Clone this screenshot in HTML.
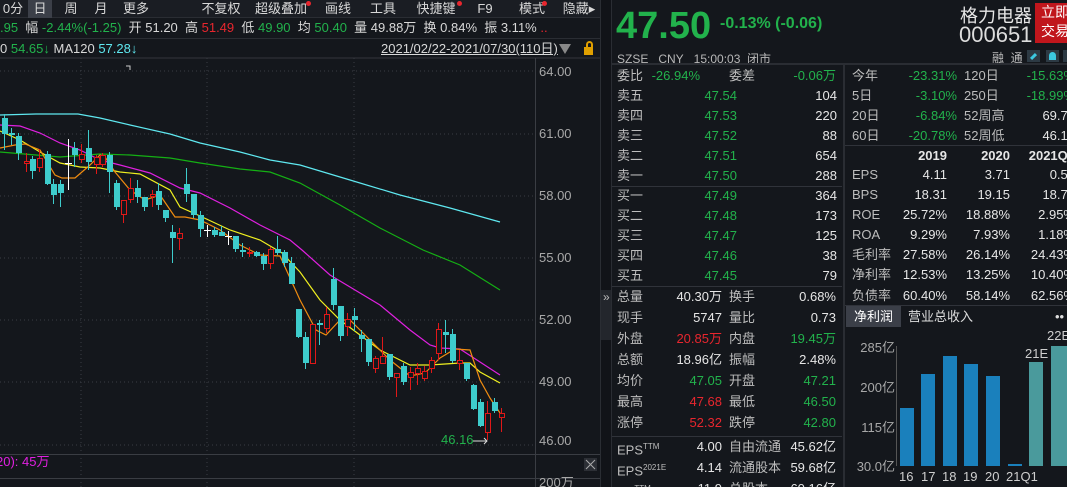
<!DOCTYPE html>
<html style="overflow:hidden;height:487px"><head><meta charset="utf-8"><style>
*{margin:0;padding:0;box-sizing:border-box}
html,body{overflow:hidden}
body{width:1067px;height:487px;overflow:hidden;background:#14171c;font-family:"Liberation Sans","Noto Sans CJK SC",sans-serif;color:#d8d8d8;position:relative;font-size:13px}
.a{position:absolute;white-space:nowrap}
.g{color:#22b24c}.r{color:#e8262e}.w{color:#e6e6e6}.l{color:#bdbdbd}
.tab{position:absolute;top:0;height:18px;line-height:18px;font-size:13px;color:#d8d8d8;text-align:center}
.row{position:absolute;height:20px;line-height:20px;font-size:13px}
.dot{position:absolute;width:5px;height:5px;border-radius:50%;background:#e8262e}
</style></head><body>
<div class="a" style="left:0;top:0;width:600px;height:18px;background:#1a1d23;border-bottom:1px solid #2a2d33"></div>
<div class="tab" style="left:0;width:26px">0分</div>
<div class="tab" style="left:28px;width:24px;background:#3b3f48">日</div>
<div class="tab" style="left:58px;width:26px">周</div>
<div class="tab" style="left:88px;width:26px">月</div>
<div class="tab" style="left:118px;width:36px">更多</div>
<div class="tab" style="left:198px;width:46px">不复权</div>
<div class="tab" style="left:250px;width:62px">超级叠加</div><div class="dot" style="left:306px;top:1px"></div>
<div class="tab" style="left:320px;width:36px">画线</div>
<div class="tab" style="left:365px;width:36px">工具</div>
<div class="tab" style="left:410px;width:52px">快捷键</div><div class="dot" style="left:457px;top:1px"></div>
<div class="tab" style="left:470px;width:30px">F9</div>
<div class="tab" style="left:510px;width:44px">模式</div><div class="dot" style="left:542px;top:1px"></div>
<div class="tab" style="left:558px;width:42px">隐藏▸</div>
<div class="a" style="left:0;top:20px;font-size:13px;line-height:16px"><span class="g">.95</span>&nbsp; 幅 <span class="g">-2.44%(-1.25)</span>&nbsp; 开 51.20&nbsp; 高 <span class="r">51.49</span>&nbsp; 低 <span class="g">49.90</span>&nbsp; 均 <span class="g">50.40</span>&nbsp; 量 49.88万&nbsp; 换 0.84%&nbsp; 振 3.11% <span class="r">..</span></div>
<div class="a" style="left:0;top:38px;width:600px;height:1px;background:#2a2d33"></div>
<div class="a" style="left:0;top:41px;font-size:13px;line-height:16px">0 <span class="g">54.65↓</span> MA120 <span style="color:#5fe8f0">57.28↓</span></div>
<div class="a" style="left:381px;top:41px;font-size:13px;line-height:16px;text-decoration:underline">2021/02/22-2021/07/30(110日)</div>
<div class="a" style="left:559px;top:44px;width:0;height:0;border-left:6px solid transparent;border-right:6px solid transparent;border-top:10px solid #888"></div>
<div class="a" style="left:584px;top:47px;width:9px;height:8px;background:#e0a000"></div>
<div class="a" style="left:586px;top:41px;width:7px;height:7px;border:2px solid #e0a000;border-bottom:none;border-radius:4px 4px 0 0"></div>
<svg class="a" style="left:0;top:0" width="600" height="487" id="ch">
<g stroke="#3a3e45" stroke-dasharray="1,3" stroke-width="1">
<line x1="0" y1="71" x2="535" y2="71"/><line x1="0" y1="134" x2="535" y2="134"/><line x1="0" y1="196" x2="535" y2="196"/><line x1="0" y1="258" x2="535" y2="258"/><line x1="0" y1="320" x2="535" y2="320"/><line x1="0" y1="382" x2="535" y2="382"/><line x1="0" y1="445" x2="535" y2="445"/>
<line x1="81" y1="58" x2="81" y2="487"/><line x1="207" y1="58" x2="207" y2="487"/><line x1="354" y1="58" x2="354" y2="487"/>
</g>
<line x1="0" y1="58" x2="600" y2="58" stroke="#33363c"/>
<line x1="535.5" y1="58" x2="535.5" y2="487" stroke="#3a3d43"/>
<line x1="0" y1="454.5" x2="600" y2="454.5" stroke="#3a3d43"/>
<line x1="0" y1="478.5" x2="600" y2="478.5" stroke="#3a3d43"/>
<g fill="#a8a8a8" font-size="13" font-family="Liberation Sans,Noto Sans CJK SC,sans-serif">
<text x="539" y="76">64.00</text><text x="539" y="138">61.00</text><text x="539" y="200">58.00</text><text x="539" y="262">55.00</text><text x="539" y="324">52.00</text><text x="539" y="386">49.00</text><text x="539" y="445">46.00</text><text x="539" y="487">200万</text>
</g>
<text x="441" y="444" fill="#22b24c" font-size="13" font-family="Liberation Sans,sans-serif">46.16</text>
<path d="M473 441H487M484 438L487 441L484 444" stroke="#ddd" fill="none"/>
<text x="-4" y="466" fill="#e020e0" font-size="13" font-family="Liberation Sans,Noto Sans CJK SC,sans-serif">20): 45万</text>
<rect x="584" y="458" width="13" height="13" fill="#2c2f35"/><path d="M586 460L595 469M595 460L586 469" stroke="#aaa"/>
<path d="M126 66H130V70" stroke="#ccc" fill="none"/>
<g fill="none" stroke-width="1.2">
<polyline stroke="#5fe8f0" points="0,115 36,114 78,114 100,118 130,125 170,134 200,143 240,152 270,160 300,165 350,180 400,195 450,208 500,222"/>
<polyline stroke="#14b014" points="0,152 60,157 100,154 130,155 170,158 200,163 240,169 270,172 300,183 340,205 380,228 423,250 460,265 500,290"/>
<polyline stroke="#e020e0" points="0,125 20,126 40,133 60,143 80,150 100,160 120,165 150,173 180,188 200,193 230,208 260,225 290,240 302,250 330,275 350,287 380,305 410,330 430,345 440,348 460,349 480,362 500,375"/>
<polyline stroke="#f0f020" points="0,131 20,140 40,152 60,163 80,167 100,168 120,172 140,174 170,190 180,207 200,216 230,230 260,240 282,253 300,272 320,300 340,320 360,335 380,350 410,365 430,365 460,363 470,363 480,372 500,383"/>
<polyline stroke="#f08c10" points="0,148 15,145 25,144 40,150 55,175 62,178 75,178 90,165 100,155 105,157 115,172 130,190 145,200 160,195 175,217 185,217 200,220 220,230 240,245 260,255 280,256 300,300 316,330 326,335 340,320 350,320 370,340 390,360 410,376 425,373 440,358 455,349 470,350 480,380 490,398 500,413"/>
</g>
<g id="cd"></g>
</svg>
<script>
var d=[[4,'c',118,134,114,150],[11,'c',133,135,128,145],[18,'c',136,153,133,160],[26,'r',161,163,153,172],[32,'c',159,171,156,179],[39,'r',158,167,149,172],[47,'c',154,184,151,185],[53,'c',184,195,179,204],[60,'c',184,193,180,207],[68,'w',163,163,139,190],[74,'c',148,155,142,167],[81,'r',154,159,144,163],[88,'c',148,162,130,170],[96,'r',157,164,155,174],[102,'r',155,164,153,167],[109,'c',155,172,152,193],[116,'c',183,207,180,210],[123,'r',200,214,200,223],[130,'r',188,199,178,203],[137,'c',188,197,180,203],[144,'c',197,207,197,211],[152,'r',194,196,190,207],[158,'c',191,205,183,210],[165,'c',210,218,210,222],[172,'c',232,238,225,263],[179,'r',233,238,228,250],[186,'c',184,194,168,202],[193,'c',194,215,194,218],[200,'c',215,229,211,237],[207,'w',230,230,225,237],[214,'c',230,235,227,237],[221,'c',232,236,226,236],[228,'w',236,236,231,245],[235,'c',236,249,236,252],[242,'c',250,252,243,257],[249,'r',252,253,247,257],[256,'c',252,256,251,257],[263,'c',256,264,253,270],[270,'r',249,263,247,269],[277,'c',249,253,236,255],[284,'c',252,263,250,267],[291,'c',263,284,257,284],[298,'c',309,337,309,338],[305,'c',337,363,332,369],[312,'r',324,363,324,363],[319,'c',323,325,320,345],[326,'r',314,328,307,333],[333,'c',279,305,268,310],[340,'c',306,336,306,341],[347,'r',319,326,313,336],[354,'c',316,320,308,331],[361,'c',335,339,330,352],[368,'c',339,362,339,366],[375,'r',358,368,356,373],[382,'r',356,363,337,363],[389,'c',354,377,354,380],[396,'r',373,377,373,397],[403,'c',366,382,363,385],[410,'r',372,377,367,390],[417,'r',368,373,363,385],[424,'r',371,378,366,381],[431,'r',360,368,357,373],[438,'r',329,353,323,360],[445,'c',332,335,320,353],[452,'c',334,361,329,363],[459,'r',360,363,350,370],[466,'c',363,379,363,381],[473,'c',385,409,384,410],[480,'c',402,426,399,427],[487,'r',413,432,401,440],[494,'c',402,411,398,413],[501,'r',413,417,408,432]];
var s='';d.forEach(function(c){var x=c[0],col=c[1]=='c'?'#3ecccc':(c[1]=='r'?'#e01818':'#ffffff');
if(c[1]=='r'){s+='<line x1="'+(x+.5)+'" y1="'+c[4]+'" x2="'+(x+.5)+'" y2="'+c[2]+'" stroke="'+col+'"/><line x1="'+(x+.5)+'" y1="'+c[3]+'" x2="'+(x+.5)+'" y2="'+c[5]+'" stroke="'+col+'"/>';
s+='<rect x="'+(x-2)+'.5" y="'+c[2]+'.5" width="5" height="'+Math.max(1,c[3]-c[2])+'" fill="#14171c" stroke="'+col+'"/>';}
else{s+='<line x1="'+(x+.5)+'" y1="'+c[4]+'" x2="'+(x+.5)+'" y2="'+c[5]+'" stroke="'+col+'"/>';
if(c[1]=='c')s+='<rect x="'+(x-2)+'" y="'+c[2]+'" width="6" height="'+Math.max(2,c[3]-c[2])+'" fill="'+col+'"/>';
else s+='<line x1="'+(x-3)+'" y1="'+c[2]+'.5" x2="'+(x+4)+'" y2="'+c[2]+'.5" stroke="'+col+'"/>';}});
document.getElementById('cd').innerHTML=s;
</script>
<div class="a" style="left:600px;top:0;width:12px;height:487px;background:#111318;border-left:1px solid #2a2d33;border-right:1px solid #2a2d33"></div>
<div class="a" style="left:601px;top:290px;width:10px;height:50px;background:#23262c"></div>
<div class="a" style="left:603px;top:290px;font-size:12px;color:#bbb">»</div>
<div class="a g" style="left:616px;top:5px;font-size:38px;font-weight:bold;line-height:42px">47.50</div>
<div class="a g" style="left:720px;top:15px;font-size:16px;font-weight:bold">-0.13% (-0.06)</div>
<div class="a" style="left:617px;top:50px;font-size:12px;color:#b8b8b8">SZSE&nbsp;&nbsp; CNY&nbsp;&nbsp; 15:00:03&nbsp; 闭市</div>
<div class="a" style="left:960px;top:2px;font-size:18px;color:#e6e6e6">格力电器</div>
<div class="a" style="left:959px;top:22px;font-size:22px;color:#ddd">000651</div>
<div class="a" style="left:1035px;top:3px;width:32px;height:40px;background:#c0161c;color:#fff;font-size:14px;line-height:19px;padding-left:6px">立即<br>交易</div>
<div class="a" style="left:992px;top:49px;font-size:12px;color:#bbb">融&nbsp; 通</div>
<div class="a" style="left:1027px;top:50px;width:13px;height:12px;background:#2d3a44"></div><div class="a" style="left:1030px;top:55px;width:7px;height:3px;background:#3cc8e0;transform:rotate(-45deg)"></div>
<div class="a" style="left:1046px;top:50px;width:13px;height:12px;background:#2d3a44"></div><div class="a" style="left:1049px;top:52px;width:7px;height:8px;background:#3cc8e0;border-radius:4px 4px 0 0"></div>
<div class="a" style="left:1063px;top:50px;width:4px;height:12px;background:#2d3a44"></div>
<div class="a" style="left:612px;top:63px;width:455px;height:2px;background:#2a2d33"></div>
<div class="a" style="left:843px;top:65px;width:2px;height:422px;background:#2a2d33"></div>
<div id="L"></div>
<div class="a" style="left:612px;top:186px;width:230px;height:1px;background:#30333a"></div>
<div class="a" style="left:612px;top:286px;width:230px;height:1px;background:#30333a"></div>
<div class="a" style="left:612px;top:436px;width:230px;height:1px;background:#30333a"></div>
<div class="a" style="left:845px;top:145px;width:222px;height:1px;background:#30333a"></div>
<div class="a" style="left:845px;top:305px;width:222px;height:1px;background:#30333a"></div>
<script>
function R(y,h){return '<div class="row" style="top:'+(y-10)+'px;left:0;width:1067px">'+h+'</div>'}
function c(x,t,cl,al){return '<span class="a '+(cl||'l')+'" style="'+(al?'right:'+(1067-x)+'px':'left:'+x+'px')+'">'+t+'</span>'}
var h='';
h+=R(76,c(617,'委比')+c(700,'-26.94%','g',1)+c(729,'委差')+c(836,'-0.06万','g',1));
var sl=[['卖五','47.54','104'],['卖四','47.53','220'],['卖三','47.52','88'],['卖二','47.51','654'],['卖一','47.50','288'],['买一','47.49','364'],['买二','47.48','173'],['买三','47.47','125'],['买四','47.46','38'],['买五','47.45','79']];
sl.forEach(function(r,i){h+=R(96+i*20,c(617,r[0])+c(737,r[1],'g',1)+c(837,r[2],'w',1));});
var st=[['总量','40.30万','w','换手','0.68%','w'],['现手','5747','w','量比','0.73','w'],['外盘','20.85万','r','内盘','19.45万','g'],['总额','18.96亿','w','振幅','2.48%','w'],['均价','47.05','g','开盘','47.21','g'],['最高','47.68','r','最低','46.50','g'],['涨停','52.32','r','跌停','42.80','g']];
st.forEach(function(r,i){h+=R(297+i*21,c(617,r[0])+c(722,r[1],r[2],1)+c(729,r[3])+c(836,r[4],r[5],1));});
h+=R(447,c(617,'EPS<sup style="font-size:8px">TTM</sup>')+c(722,'4.00','w',1)+c(729,'自由流通')+c(836,'45.62亿','w',1));
h+=R(468,c(617,'EPS<sup style="font-size:8px">2021E</sup>')+c(722,'4.14','w',1)+c(729,'流通股本')+c(836,'59.68亿','w',1));
h+=R(489,c(617,'PE<sup style="font-size:8px">TTM</sup>')+c(722,'11.9','w',1)+c(729,'总股本')+c(836,'60.16亿','w',1));
var pr=[['今年','-23.31%','120日','-15.63%'],['5日','-3.10%','250日','-18.99%'],['20日','-6.84%','52周高','69.71'],['60日','-20.78%','52周低','46.16']];
pr.forEach(function(r,i){h+=R(76+i*20,c(852,r[0])+c(957,r[1],'g',1)+c(964,r[2])+c(1075,r[3],r[3][0]=='-'?'g':'w',1));});
h+=R(156,c(947,'<b>2019</b>','w',1)+c(1010,'<b>2020</b>','w',1)+c(1075,'<b>2021Q1</b>','w',1));
var fn=[['EPS','4.11','3.71','0.54'],['BPS','18.31','19.15','18.77'],['ROE','25.72%','18.88%','2.95%'],['ROA','9.29%','7.93%','1.18%'],['毛利率','27.58%','26.14%','24.43%'],['净利率','12.53%','13.25%','10.40%'],['负债率','60.40%','58.14%','62.56%']];
fn.forEach(function(r,i){h+=R(175+i*20+(i==6?1:0),c(852,r[0])+c(947,r[1],'w',1)+c(1010,r[2],'w',1)+c(1075,r[3],'w',1));});
document.getElementById('L').innerHTML=h;
</script>
<div class="a" style="left:846px;top:306px;width:55px;height:21px;background:#3b3f48;color:#fff;line-height:21px;text-align:center;font-size:13px">净利润</div>
<div class="a" style="left:908px;top:306px;line-height:21px;font-size:13px;color:#ddd">营业总收入</div>
<div class="a" style="left:1055px;top:306px;line-height:21px;color:#ddd">••</div>
<svg class="a" style="left:845px;top:328px" width="222" height="159">
<g fill="#a8a8a8" font-size="13" font-family="Liberation Sans,Noto Sans CJK SC,sans-serif" text-anchor="end">
<text x="50" y="24">285亿</text><text x="50" y="64">200亿</text><text x="50" y="104">115亿</text><text x="50" y="143">30.0亿</text></g>
<line x1="51.5" y1="18" x2="51.5" y2="138" stroke="#555"/>
<g fill="#1a80bc"><rect x="55" y="80" width="14" height="58"/><rect x="76" y="46" width="14" height="92"/><rect x="98" y="28" width="14" height="110"/><rect x="119" y="36" width="14" height="102"/><rect x="141" y="48" width="14" height="90"/><rect x="163" y="136" width="14" height="2"/></g>
<g fill="#4a9a9c"><rect x="184" y="34" width="14" height="104"/><rect x="206" y="18" width="16" height="120"/></g>
<g fill="#cfcfcf" font-size="13" font-family="Liberation Sans,sans-serif"><text x="180" y="30">21E</text><text x="202" y="12">22E</text>
<text x="54" y="153">16</text><text x="76" y="153">17</text><text x="97" y="153">18</text><text x="118" y="153">19</text><text x="140" y="153">20</text><text x="161" y="153">21Q1</text></g>
</svg>
</body></html>
